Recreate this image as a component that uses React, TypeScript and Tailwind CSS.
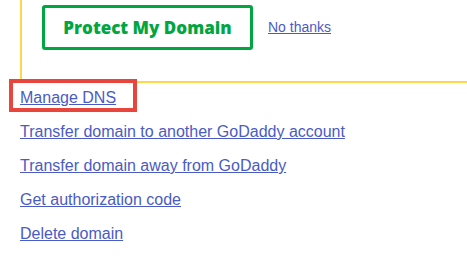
export default function App() {
  const links = [
    "Transfer domain to another GoDaddy account",
    "Transfer domain away from GoDaddy",
    "Get authorization code",
    "Delete domain",
  ];

  return (
    <div className="relative w-[467px] h-[257px] overflow-hidden bg-white font-['Liberation_Sans',Arial,sans-serif]">
      {/* upsell panel, clipped at the top */}
      <div className="ml-[20px] border-l-2 border-b-2 border-[#fdd94a] pl-[20px] pt-[5px] pb-[31px] flex items-center gap-[15px]">
        <button className="w-[211px] h-[45px] border-[3px] border-[#00a63f] rounded-[3px] text-[#00a63f] text-[17px] font-extrabold font-['Open_Sans',sans-serif]">
          Protect My Domain
        </button>
        <a href="#" className="text-[14px] text-[#4a5bc4] underline">
          No thanks
        </a>
      </div>

      <div className="ml-[20px] mt-[6px] flex flex-col gap-[16px]">
        <div className="relative">
          <a href="#" className="block text-[16px] leading-[18px] text-[#4a5bc4] underline">
            Manage DNS
          </a>
          <div className="absolute left-[-11px] top-[-10px] w-[128px] h-[33px] border-4 border-[#e8463c]" />
        </div>
        {links.map((label) => (
          <a key={label} href="#" className="block text-[16px] leading-[18px] text-[#4a5bc4] underline">
            {label}
          </a>
        ))}
      </div>
    </div>
  );
}
